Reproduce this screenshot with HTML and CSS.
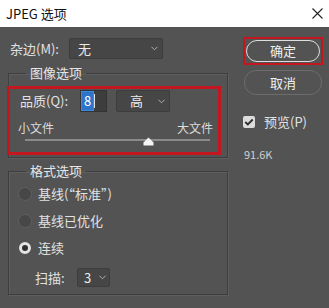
FILE: index.html
```html
<!DOCTYPE html>
<html lang="zh-CN">
<head>
<meta charset="utf-8">
<title>JPEG 选项</title>
<link rel="stylesheet" href="styles.css">
</head>
<body>
<div class="dialog">
  <div class="titlebar">
    <span class="title">JPEG 选项</span>
    <svg class="close" width="11" height="11" viewBox="0 0 11 11"><path d="M0.5 0.5 L10.5 10.5 M10.5 0.5 L0.5 10.5" stroke="#222" stroke-width="1.1" fill="none"/></svg>
  </div>
  <div class="main">
    <div class="left">
      <div class="matte-row">
        <span class="matte-label">杂边(M):</span>
        <div class="select matte-select"><span>无</span><svg class="chev" width="7" height="5" viewBox="0 0 7 5"><path d="M0.5 0.8 L3.5 3.8 L6.5 0.8" stroke="#b0b0b0" stroke-width="1" fill="none"/></svg></div>
      </div>
      <fieldset class="group group-image">
        <legend>图像选项</legend>
        <div class="highlight">
          <div class="quality-row">
            <span class="quality-label">品质(Q):</span>
            <div class="num-input"><span class="sel">8</span><span class="caret"></span></div>
            <div class="select quality-select"><span>高</span><svg class="chev" width="7" height="5" viewBox="0 0 7 5"><path d="M0.5 0.8 L3.5 3.8 L6.5 0.8" stroke="#b0b0b0" stroke-width="1" fill="none"/></svg></div>
          </div>
          <div class="size-row">
            <span>小文件</span>
            <span>大文件</span>
          </div>
          <div class="track">
            <svg class="thumb" width="11" height="9" viewBox="0 0 11 9"><path d="M5.5 0.5 L10.5 5.5 L10.5 8.5 L0.5 8.5 L0.5 5.5 Z" fill="#f4f4f4"/></svg>
          </div>
        </div>
      </fieldset>
      <fieldset class="group group-format">
        <legend>格式选项</legend>
        <div class="radio-row first"><span class="radio"></span><span>基线(“标准”)</span></div>
        <div class="radio-row"><span class="radio"></span><span>基线已优化</span></div>
        <div class="radio-row"><span class="radio on"></span><span>连续</span></div>
        <div class="scan-row">
          <span class="scan-label">扫描:</span>
          <div class="select scan-select"><span>3</span><svg class="chev" width="7" height="5" viewBox="0 0 7 5"><path d="M0.5 0.8 L3.5 3.8 L6.5 0.8" stroke="#b0b0b0" stroke-width="1" fill="none"/></svg></div>
        </div>
      </fieldset>
    </div>
    <div class="right">
      <div class="ok-mark"><div class="btn ok">确定</div></div>
      <div class="btn cancel">取消</div>
      <div class="preview-row">
        <span class="checkbox"><svg width="10" height="8" viewBox="0 0 10 8"><path d="M1.3 4 L3.8 6.5 L8.7 1.5" stroke="#2c2c2c" stroke-width="1.8" fill="none"/></svg></span>
        <span>预览(P)</span>
      </div>
      <div class="filesize">91.6K</div>
    </div>
  </div>
</div>
</body>
</html>
```

FILE: styles.css
```css
* { box-sizing: border-box; }
html, body { margin: 0; padding: 0; }
body {
  width: 329px;
  height: 308px;
  overflow: hidden;
  font-family: "Noto Sans CJK SC", "Noto Sans", sans-serif;
  font-size: 13px;
}
.dialog { width: 329px; height: 308px; display: flex; flex-direction: column; }
.titlebar {
  height: 27px;
  flex: none;
  background: #ffffff;
  display: flex;
  align-items: center;
  justify-content: space-between;
  padding: 0 6px 0 6px;
}
.title { color: #111; font-size: 13px; line-height: 16px; }
.close { margin-right: 0; }
.main {
  flex: 1;
  background: #535353;
  color: #e2e2e2;
  display: flex;
}
.left { width: 229px; padding-left: 8px; flex: none; }
.right { width: 80px; margin-left: 14px; padding-top: 10px; flex: none; }

.select {
  display: flex;
  align-items: center;
  justify-content: space-between;
  background: #464646;
  border: 1px solid #3d3d3d;
  border-radius: 2px;
  color: #ececec;
  line-height: 16px;
}
.chev { flex: none; }

.matte-row { display: flex; align-items: center; height: 21px; margin-top: 11px; }
.matte-label { width: 61px; padding-left: 2px; line-height: 16px; }
.matte-select { width: 94px; height: 21px; padding: 0 4px 0 8px; }

.group {
  margin: 0;
  padding: 0;
  width: 220px;
  border: 1px solid #3e3e3e;
  box-shadow: 1px 1px 0 #5e5e5e, inset 1px 1px 0 #5e5e5e;
}
.group legend {
  margin-left: 17px;
  padding: 0 4px;
  line-height: 18px;
  font-size: 13px;
  color: #e6e6e6;
}
.group-image { margin-top: 5px; padding-bottom: 2px; }
.group-format { margin-top: 4px; padding-bottom: 7px; height: 133px; }

.highlight {
  margin: 4px 0 0 -2px;
  width: 214px;
  border: 3px solid #c3161f;
  padding: 1px 0 11px 0;
}
.quality-row { display: flex; align-items: center; height: 22px; padding-left: 10px; }
.quality-label { width: 60px; line-height: 16px; }
.num-input {
  width: 27px;
  height: 22px;
  background: #3d3d3d;
  border: 1px solid #333;
  display: flex;
  align-items: center;
  padding-left: 1px;
}
.num-input .sel {
  background: #2d74c8;
  color: #ffffff;
  line-height: 18px;
  padding: 0 2px;
  font-size: 13px;
  box-shadow: 0 0 0 1px #3b8be0;
}
.num-input .caret { width: 1px; height: 14px; background: #e0e0e0; margin-left: 1px; }
.quality-select { width: 54px; height: 22px; margin-left: 9px; padding: 0 4px 0 13px; }

.size-row {
  display: flex;
  justify-content: space-between;
  margin-top: 8px;
  padding: 0 5px 0 8px;
  font-size: 12px;
  line-height: 16px;
  color: #dcdcdc;
}
.track {
  position: relative;
  margin: 3px 0 0 15px;
  width: 185px;
  height: 2px;
  background: #8a8a8a;
}
.thumb { position: absolute; left: 118px; top: -2px; }

.radio-row {
  display: flex;
  align-items: center;
  height: 18px;
  margin-top: 9px;
  padding-left: 10px;
  line-height: 18px;
}
.radio-row.first { margin-top: 5px; }
.radio {
  width: 12px;
  height: 12px;
  border-radius: 50%;
  background: #474747;
  box-shadow: 0 0 0 1px #5c5c5c;
  margin-right: 7px;
  flex: none;
}
.radio.on {
  background: #2f2f2f;
  border: 3.5px solid #e4e4e4;
  box-shadow: none;
}
.scan-row { display: flex; align-items: center; height: 19px; margin-top: 11px; padding-left: 26px; }
.scan-label { width: 42px; line-height: 16px; }
.scan-select { width: 33px; height: 19px; padding: 0 3px 0 6px; }

.ok-mark {
  width: 80px;
  height: 28px;
  border: 2px solid #c3161f;
  padding: 1px;
}
.btn {
  display: flex;
  align-items: center;
  justify-content: center;
  font-size: 13px;
  color: #f0f0f0;
  line-height: 16px;
}
.ok {
  height: 22px;
  border: 1px solid #dedede;
  border-radius: 11px;
}
.cancel {
  margin: 5px 1px 0 1px;
  height: 25px;
  border: 1px solid #6c6c6c;
  border-radius: 12px;
}
.preview-row {
  display: flex;
  align-items: center;
  height: 16px;
  margin-top: 19px;
  line-height: 16px;
}
.checkbox {
  width: 12px;
  height: 12px;
  background: #dcdcdc;
  border-radius: 2px;
  display: flex;
  align-items: center;
  justify-content: center;
  margin-right: 9px;
  flex: none;
}
.filesize {
  margin-top: 17px;
  margin-left: 1px;
  font-size: 11px;
  line-height: 14px;
  color: #cfcfcf;
}
```
